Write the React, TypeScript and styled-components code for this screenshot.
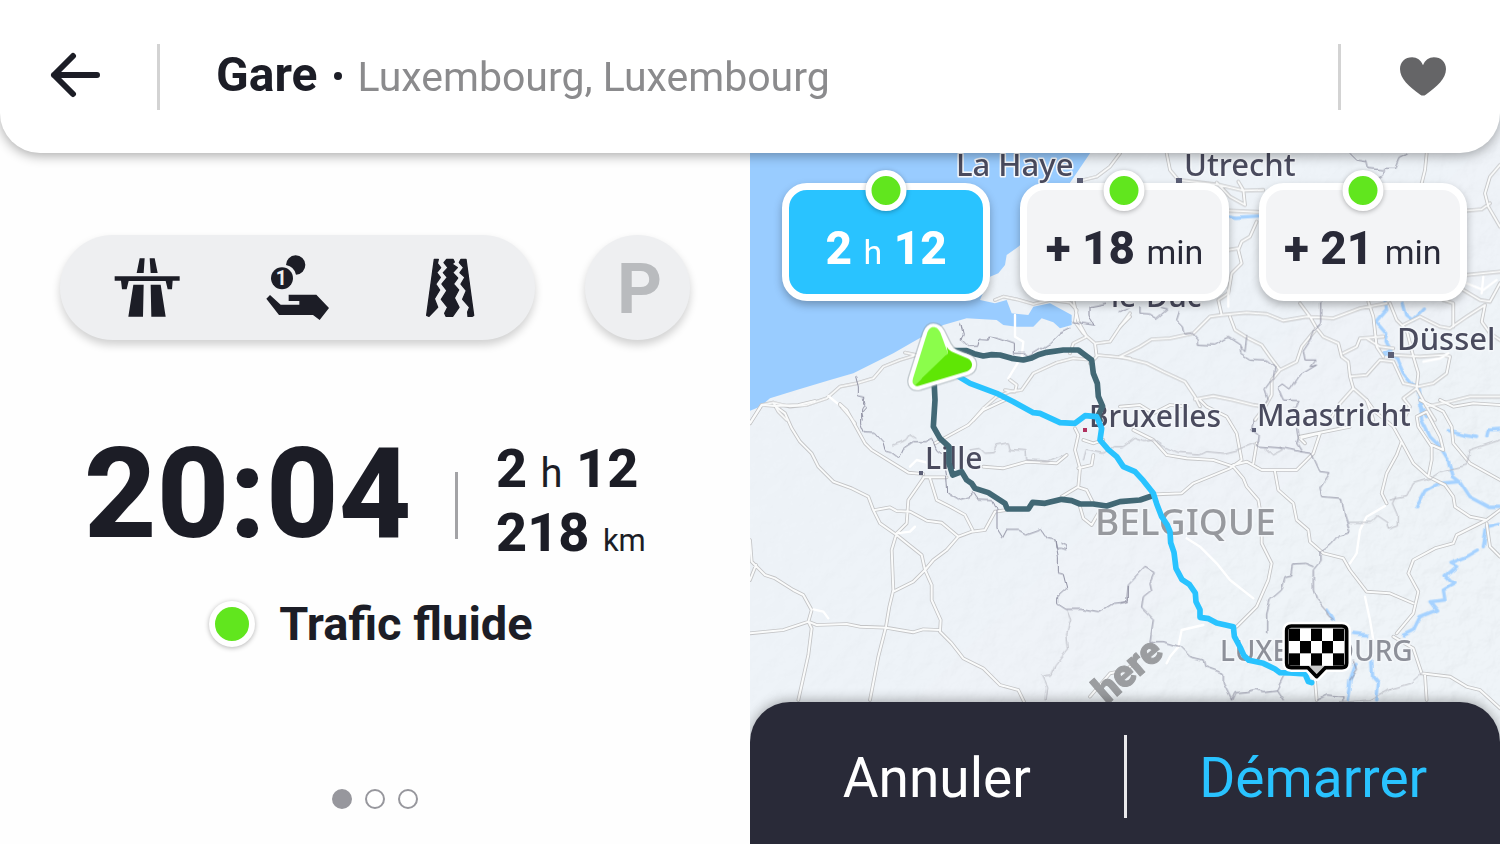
import React from "react";
import styled, { createGlobalStyle, css } from "styled-components";

const ink = "#1c1d26";
const navy = "#292a38";
const sky = "#29c3ff";
const lime = "#61e61e";

const GlobalStyle = createGlobalStyle`
  *, *::before, *::after { box-sizing: border-box; }
  body {
    margin: 0;
    background: #fefefe;
    color: ${ink};
    font-family: Roboto, "Liberation Sans", sans-serif;
  }
  h1, p { margin: 0; }
  button {
    margin: 0;
    padding: 0;
    border: 0;
    background: none;
    color: inherit;
    font: inherit;
    cursor: pointer;
  }
  svg { display: block; }
`;

const Screen = styled.div`
  display: flex;
  flex-direction: column;
  min-height: 100vh;
`;

const Header = styled.header`
  position: relative;
  z-index: 2;
  display: flex;
  align-items: center;
  height: 153px;
  background: #fff;
  border-radius: 0 0 40px 40px;
  box-shadow: 0 3px 12px rgba(0, 0, 0, 0.32);
`;

const BackButton = styled.button`
  display: flex;
  align-items: center;
  justify-content: center;
  flex: 0 0 157px;
  height: 100%;
  padding: 0 7px 3px 0;
`;

const FavouriteButton = styled.button`
  display: flex;
  align-items: center;
  justify-content: center;
  flex: 0 0 159px;
  height: 100%;
  padding-left: 4px;
`;

const Divider = styled.span<{ $height: number; $color: string }>`
  flex: none;
  width: 3px;
  height: ${(p) => p.$height}px;
  background: ${(p) => p.$color};
`;

const Destination = styled.div`
  flex: 1;
  display: flex;
  align-items: baseline;
  padding: 0 0 2px 56px;
  line-height: 56px;
  white-space: nowrap;
`;

const PlaceName = styled.h1`
  font-size: 48px;
  font-weight: 700;
`;

const Bullet = styled.span`
  align-self: center;
  width: 8px;
  height: 8px;
  margin: 0 15px 0 17px;
  border-radius: 50%;
  background: ${ink};
`;

const PlaceCity = styled.p`
  color: #8b8b8d;
  font-size: 41px;
`;

const Main = styled.main`
  flex: 1;
  display: grid;
  grid-template-columns: 1fr 1fr;
  margin-top: -40px;
`;

const Summary = styled.section`
  display: flex;
  flex-direction: column;
  padding: 122px 60px 35px;
`;

const Options = styled.div`
  display: flex;
  gap: 50px;
`;

const raised = css`
  height: 105px;
  background: #eeeff1;
  box-shadow: 0 5px 8px rgba(0, 0, 0, 0.18);
`;

const OptionPill = styled.div`
  ${raised}
  flex: 1;
  display: grid;
  grid-template-columns: repeat(3, 1fr);
  align-items: center;
  justify-items: center;
  padding: 0 9px 0 11px;
  border-radius: 53px;
`;

const ParkingButton = styled.button`
  ${raised}
  width: 105px;
  padding: 3px 0 0 4px;
  border-radius: 50%;
  color: #b9bbbe;
  font-size: 70px;
  font-weight: 700;
  line-height: 102px;
`;

const Arrival = styled.div`
  display: flex;
  align-items: center;
  margin-top: 80px;
  padding-left: 24px;
`;

const Clock = styled.p`
  width: 330px;
  font-size: 126px;
  font-weight: 800;
  line-height: 148px;
`;

const Totals = styled.div`
  padding: 14px 0 0 38px;
`;

const Figure = styled.p`
  height: 64px;
  font-size: 54px;
  font-weight: 800;
  line-height: 64px;
  white-space: nowrap;
`;

const Unit = styled.span<{ $size: number }>`
  font-size: ${(p) => p.$size}px;
  font-weight: 400;
  line-height: 1;
`;

const ClockDivider = styled(Divider)`
  margin: 22px 0 0 41px;
`;

const Traffic = styled.p`
  display: flex;
  align-items: center;
  justify-content: center;
  gap: 24px;
  margin-top: 28px;
  padding-right: 8px;
  font-size: 47px;
  font-weight: 700;
  line-height: 56px;
`;

const StatusDot = styled.span<{ $size: number }>`
  flex: none;
  width: ${(p) => p.$size}px;
  height: ${(p) => p.$size}px;
  border: 6px solid #fff;
  border-radius: 50%;
  background: ${lime};
  box-shadow: 0 1px 5px rgba(0, 0, 0, 0.3);
`;

const Pager = styled.nav`
  display: flex;
  justify-content: center;
  gap: 13px;
  margin-top: auto;
`;

const PageDot = styled.button<{ $active?: boolean }>`
  width: 20px;
  height: 20px;
  border: 2px solid #97979d;
  border-radius: 50%;
  background: ${(p) => (p.$active ? "#97979d" : "#fff")};
`;

const MapPanel = styled.section`
  position: relative;
  display: flex;
  flex-direction: column;
  justify-content: space-between;
  overflow: hidden;
  background: #ecf1f6;
`;

const MapCanvas = styled.svg`
  position: absolute;
  inset: 0;
  width: 100%;
  height: 100%;
`;

const Routes = styled.div`
  position: relative;
  display: grid;
  grid-template-columns: repeat(3, 1fr);
  gap: 30px;
  padding: 70px 33px 0 32px;
`;

const RouteCard = styled.button<{ $selected?: boolean }>`
  position: relative;
  height: 118px;
  border: 7px solid #fff;
  border-radius: 25px;
  background: ${(p) => (p.$selected ? sky : "#f3f4f6")};
  color: ${(p) => (p.$selected ? "#fff" : navy)};
  box-shadow: 0 4px 8px rgba(0, 0, 0, 0.28);
  font-size: 46px;
  font-weight: 800;
  line-height: 56px;
  padding-top: 11px;
  white-space: nowrap;
`;

const RouteStatus = styled(StatusDot)`
  position: absolute;
  top: -20px;
  left: 50%;
  transform: translateX(-50%);
`;

const Actions = styled.div`
  position: relative;
  display: flex;
  align-items: center;
  height: 142px;
  padding-top: 6px;
  border-radius: 40px 40px 0 0;
  background: ${navy};
  box-shadow: 0 -2px 12px rgba(0, 0, 0, 0.3);
`;

const Action = styled.button<{ $accent?: boolean }>`
  flex: 1;
  height: 100%;
  padding-top: 4px;
  color: ${(p) => (p.$accent ? sky : "#fff")};
  font-size: 55px;
`;

const MapLabel = styled.text<{ $size?: number; $tone?: string }>`
  font-family: "Noto Sans", "Open Sans", sans-serif;
  font-size: ${(p) => p.$size ?? 30}px;
  font-weight: 500;
  fill: ${(p) => p.$tone ?? "#4a4b5e"};
  stroke: #f4f7fa;
  stroke-width: 3px;
  stroke-linejoin: round;
  paint-order: stroke;
`;

const MapBrand = styled.text`
  font-family: Roboto, sans-serif;
  font-size: 38px;
  font-weight: 900;
  fill: #9b9da0;
  stroke: #9b9da0;
  stroke-width: 1px;
`;

/* Line work is stored per map tile, three units to a map pixel. */
type Tile = {
  x: number;
  y: number;
  rivers: string[];
  roads: string[];
  lanes: string[];
  borders: string[];
};

const tiles: Tile[] = [
  {
    x: 0,
    y: 81,
    rivers: [],
    roads: [
      "M735 480L760 470L800 478L850 492L900 480L960 488L980 510L975 545L1000 580L1035 610L1040 650L1020 670",
      "M970 480L985 545L1010 590L970 610L960 640",
      "M1040 610L1080 605L1110 560L1140 530",
      "M1040 645L1090 650L1140 655",
      "M465 638L500 645L450 660L400 680L370 715L320 730L270 740L230 775L170 795L120 800L70 788L35 795L0 850",
      "M70 788L85 815L110 840",
      "M1030 660L970 655L920 668L850 700L815 750L780 755L740 770L700 805L670 840",
      "M780 720L800 735L795 755L765 750",
      "M1110 40L1080 80L1040 110L1000 120",
      "M270 795L300 830L315 850",
    ],
    lanes: [
      "M795 525V590L820 605L815 650L790 690L775 715",
      "M235 768L262 790L280 800L310 840",
    ],
    borders: [
      "M632 548L640 580L633 600L655 622L683 622L690 598L715 600L720 588L750 598L790 612L790 640L820 640L835 650L900 610L930 580L960 565",
      "M965 545L1035 555L1020 530L1020 500L1070 490",
      "M317 710L325 740L325 770L345 775L340 795L348 805L335 820L340 840",
    ],
  },
  {
    x: 1110,
    y: 81,
    rivers: [
      "M325 228L350 232L415 228",
      "M795 485L800 510L770 545L800 580L795 600L810 630L790 640L830 655L850 700L870 725L895 750L900 800L920 830",
      "M850 490L860 525L880 540L910 510",
    ],
    roads: [
      "M140 40L150 90L175 120L300 135L370 152L430 150",
      "M290 128L330 170L375 195L370 150L355 125",
      "M920 40L915 90L905 130",
      "M325 212L415 216",
      "M1140 75L1110 110L1095 160L1105 200L1140 260",
      "M1040 212L1085 208L1110 190",
      "M410 245L390 290L365 305L355 330L365 370L335 400L325 460L295 480L305 525",
      "M325 330L355 325",
      "M305 525L380 518L440 522L490 542L560 530L640 535L720 505L800 490",
      "M305 525L270 530L220 580L150 595L95 598L60 620L0 650",
      "M0 650L80 670L130 695L195 725L225 770L240 800",
      "M225 778L280 768L340 780L400 795L435 800",
      "M330 530L345 570L385 595L425 615L450 650L480 690L455 720L455 765L435 800L405 840",
      "M480 690L530 665L545 620L590 565L570 530L540 490",
      "M590 565L610 590L655 610L665 650L685 665L690 710L700 745L660 790L630 840",
      "M690 710L740 705L780 660L820 665L850 730L895 740",
      "M670 640L710 620L720 595L790 590",
      "M740 595L780 620L820 625",
      "M745 485L760 530L770 620L790 650",
      "M810 490L830 540L860 570L880 650L895 700L890 745L920 800L945 840",
      "M820 645L900 650L970 645L990 650L980 700L940 730L895 740",
      "M850 555L900 530L960 560L990 565L1040 530L1095 495",
      "M1040 405L1140 395",
      "M1030 450L1080 480L1110 485L1140 430",
      "M1095 495L1085 545L1110 580L1140 600",
      "M970 480L1000 490L1000 560",
      "M700 745L740 780L760 840",
      "M890 745L850 775L870 800L850 840",
      "M920 800L990 785L1050 770L1140 770",
      "M0 560L30 520",
    ],
    lanes: [
      "M910 665L960 655L985 640",
      "M1040 430L1090 450L1130 420",
      "M1090 410L1085 460",
      "M325 450V500",
    ],
    borders: [
      "M690 40L710 60L740 65L745 85L790 90L788 105L775 115",
      "M790 85L828 85L840 55L865 42",
      "M60 500L60 520L90 522L110 535L140 510L120 505",
      "M178 515L170 540L190 560L195 582L215 580L232 600L232 613L285 615L325 592L360 615L362 640L390 658L440 660L465 680L460 715L435 750L445 780L430 800",
      "M605 485L605 550L580 575L570 600L550 630L555 660L585 660L570 680L590 675L540 705L510 750L490 735L475 745L490 780L535 782L530 800L515 810L535 840",
      "M380 590L375 635L360 620",
      "M0 515L30 500",
    ],
  },
  {
    x: 0,
    y: 861,
    rivers: [],
    roads: [
      "M0 70L35 15L75 18L145 15L195 3",
      "M75 18L105 40L125 85L150 125L185 160L205 200L250 245L305 265L355 290L370 330L390 370L440 405L515 465L525 510L545 555L545 600L572 660L570 695L605 730L640 775L700 805L750 855L805 870L822 905",
      "M270 12L290 30L345 130L365 150L430 190L475 218L520 222",
      "M520 235L475 300L470 370L440 400L425 450L430 570L418 620L408 680L385 770L360 900",
      "M540 235L560 300L600 320L645 345L668 390",
      "M520 232L590 232",
      "M375 330L420 322L440 333L480 335L530 362L575 368L625 410L665 395L705 390L735 335L770 330",
      "M625 410L590 450L550 480L525 510L490 545L430 575",
      "M555 130L600 105L655 75L700 30L765 0",
      "M0 420L5 485L45 525L75 535L130 570L160 585L185 630L175 665L185 685L175 765L145 900",
      "M0 540L18 495",
      "M0 700L100 690L175 665L200 675L290 672L330 680L408 683L490 697L520 688L568 690",
      "M700 200L760 205L830 185L920 190L950 165",
      "M975 85L985 105L975 150L990 205L985 260L935 290",
      "M985 262L1010 270L1030 310",
      "M985 205L1025 195L1030 165",
      "M990 320L1000 355L1025 375L1045 340",
      "M1000 120L1030 130L1060 120",
      "M1020 890L1080 820L1130 810L1140 800",
    ],
    lanes: [
      "M480 200L500 180L540 190",
      "M440 400L480 395L495 380",
      "M190 628L220 635L235 655",
    ],
    borders: [
      "M340 0L345 15L335 30L335 70L345 95L370 97L400 130L405 150L425 155L448 172L460 145L490 125L525 125L545 115L560 150L580 165L590 230L593 280L625 300L660 290L670 278L685 300L725 302L738 330L738 385L755 413L768 388L805 388L830 402L875 386L895 415L915 420L918 445L932 445L948 450L948 438L932 430M915 420L925 470L925 515L943 520L953 560L920 590L920 612L945 628L990 628L1045 638L1090 610L1135 605L1135 560",
    ],
  },
  {
    x: 1110,
    y: 861,
    rivers: [
      "M900 0L905 60L930 110L960 140L985 180L1000 230L1020 245L1050 290L1110 322L1140 322",
      "M1020 245L960 250L915 275L890 320",
      "M985 92L1030 106L1070 112",
      "M1100 110L1105 90L1140 88",
      "M1135 370L1100 380L1090 440",
      "M1075 450L1040 470L990 490L1010 500L975 530L990 545L1005 550L970 570L975 600L930 605L950 630L900 650L880 690L850 705",
      "M755 780L758 830L775 850L770 900",
      "M700 700L740 705",
      "M708 790L690 840L682 900",
      "M622 630L640 660",
    ],
    roads: [
      "M0 20L60 15L100 40L150 15L200 20",
      "M40 90L100 120L140 165L200 175L280 180L340 200L370 235L380 260L415 300L425 360L425 430L455 490L445 540L410 620L350 680",
      "M240 0L260 20L320 50L350 100L365 180L330 205L270 230L220 250L185 280L110 283",
      "M340 195L380 185L425 210L530 210L580 160L600 100L540 115L555 130",
      "M410 130L400 190",
      "M540 110L600 98L690 80",
      "M465 215L475 270L520 310L530 360L565 390L570 425L610 460L670 475L690 510L740 575L810 580L880 610",
      "M740 0L765 35L820 80L845 125L830 165L800 220L785 280L800 310",
      "M845 125L880 190L925 230L975 255L1000 290L1005 320L1050 350L1100 360L1140 330",
      "M925 230L935 180L935 140L895 80L890 50L920 35L960 110L970 150L935 135",
      "M900 0L970 35L995 80L1000 130L1050 190L1140 240",
      "M1100 360L1010 405L1000 430L945 445L880 480L865 520L895 575L880 640L830 700",
      "M820 710L880 745L905 820L990 830L1040 860L1080 870L1140 925",
      "M915 825L920 900",
      "M585 840L590 900",
      "M1100 370L1110 440L1140 470",
      "M960 0L1000 20L1060 10L1140 15",
    ],
    lanes: [
      "M795 318L740 350L720 390L710 460L690 490",
      "M200 415L240 440L290 490L330 540L400 595",
      "M735 590L750 660L760 720",
      "M250 675L185 690L175 740L150 770L140 790",
    ],
    borders: [
      "M400 60L395 90L415 105L410 138L495 145L540 155L575 160L600 215L630 218L600 265L605 290L665 295L675 350L690 395L655 405L635 430L600 455L600 485L580 510L580 570L590 600L620 635L625 650L640 662",
      "M530 85L535 115L530 130L545 155",
      "M580 500L555 490L520 492L515 525L495 530L485 570L450 600L440 640L440 700",
      "M0 610L20 605L25 555L75 502L103 518L90 548L95 570L70 590L65 625L100 660L90 725L130 725L180 740L210 770L250 780L255 800L310 820L310 850L335 900",
      "M335 900L345 878L380 875L410 868L430 875L470 870L490 830",
      "M470 870L490 900",
      "M590 900L620 885L670 890L665 905",
      "M700 780L710 810L690 840",
    ],
  },
];

/* Regional limits, drawn fainter than the national borders. */
const regions = [
  "M430 996L470 981L480 966L495 976",
  "M660 1011L690 1006L705 1021L730 1019L740 996L775 989L780 1009L828 1013L830 1041L895 1044L935 1026",
  "M950 1491L962 1521L950 1561L955 1611L915 1661L905 1686L875 1689L890 1721L885 1761",
  "M1000 1041L1010 1011L1060 1021L1090 1001L1120 1001L1155 976L1185 986L1210 981L1240 1001L1280 1021L1350 1026L1370 1016L1420 1021L1460 1011L1510 991",
  "M1550 1006L1570 1026L1600 1011L1590 1001",
  "M1940 1151L1930 1171L1945 1206L1945 1236L1915 1246L1910 1231L1880 1211L1860 1231L1795 1231",
  "M1920 1161L1970 1151L1990 1111L2040 1096L2070 1076L2150 1056L2160 1011L2250 981",
  "M1750 1771L1860 1761L1915 1731L1980 1711L2015 1681",
];

const darkRoute = [
  "M600 713L650 713L672 722L700 729L725 725L750 726L785 736L820 741L845 735L865 725L890 718L940 711L985 711L1005 726L1025 741L1030 781L1042 811L1045 850L1058 880L1045 906L1050 922",
  "M552 800L555 861L550 941L570 976L597 1001L597 1051L608 1086L635 1076L650 1101L665 1111L675 1126L715 1139L765 1171L772 1188L835 1188L848 1168L885 1171L935 1159L965 1163L990 1173L1030 1173L1070 1179L1110 1166L1170 1161L1205 1149",
];
const lightRoute =
  "M600 775L630 793L660 811L740 841L790 866L850 899L870 901L930 929L975 931L1005 908L1040 911L1055 946L1050 981L1075 1010L1100 1031L1120 1061L1155 1076L1180 1103L1210 1141L1220 1172L1235 1211L1252 1236L1260 1256L1262 1289L1272 1318L1278 1366L1296 1400L1318 1414L1336 1440L1338 1466L1350 1490L1350 1513L1376 1517L1400 1530L1450 1541L1453 1570L1470 1602L1482 1628L1497 1642L1540 1651L1575 1668L1590 1679L1620 1680L1665 1683L1675 1706L1685 1709";

const checks = Array.from({ length: 15 }, (_, i) => i).filter((i) => i % 2 === 0);

const flagShape =
  "M514 678H666Q680 678 680 692V789Q680 803 666 803H616L590 830L564 803H514Q500 803 500 789V692Q500 678 514 678Z";
const arrowShape =
  "M550 566C541 566 537 574 534 582L492 715C487 731 494 738 508 734L650 690C667 684 667 666 652 659L614 643C600 637 595 632 588 618L568 578C563 569 558 566 550 566Z";

function RouteMap() {
  return (
    <MapCanvas
      viewBox="0 0 750 731"
      preserveAspectRatio="xMidYMid slice"
      role="img"
      aria-label="Carte des itinéraires"
    >
      <defs>
        <filter id="relief" x="0" y="0" width="100%" height="100%">
          <feTurbulence type="fractalNoise" baseFrequency="0.05" numOctaves="5" seed="8" />
          <feDiffuseLighting surfaceScale="4" lightingColor="#ffffff">
            <feDistantLight azimuth="225" elevation="60" />
          </feDiffuseLighting>
        </filter>
        <filter id="meander" filterUnits="userSpaceOnUse" x="0" y="0" width="2250" height="2193">
          <feTurbulence type="fractalNoise" baseFrequency="0.025" numOctaves="1" seed="3" />
          <feDisplacementMap in="SourceGraphic" scale="18" xChannelSelector="R" yChannelSelector="G" />
        </filter>
        <linearGradient id="reliefFade" x1="0" y1="0" x2="1" y2="1">
          <stop offset="0.35" stopColor="#fff" stopOpacity="0.2" />
          <stop offset="0.75" stopColor="#fff" stopOpacity="0.8" />
        </linearGradient>
        <mask id="reliefMask">
          <rect width="750" height="731" fill="url(#reliefFade)" />
        </mask>
      </defs>
      <rect width="750" height="731" fill="#eef3f8" />
      <g mask="url(#reliefMask)">
        <rect width="750" height="731" filter="url(#relief)" opacity="0.13" />
      </g>
      <g transform="scale(0.33333)" fill="none" strokeLinejoin="round" strokeLinecap="round">
        <path
          fill="#99ccff"
          d="M0 0H1060L1020 121L960 209L880 330L805 401L770 426L765 456L745 481L720 491L690 561L735 571L770 561L785 601L835 606L850 581L900 571L965 606V636L930 646L910 628L875 616L850 641L800 641L760 636L740 621L650 616L580 636L490 686L430 721L310 781L240 801L140 831L60 856L30 881L0 893Z"
        />
        <g filter="url(#meander)">
          {tiles.map((t) => (
            <path
              key={`${t.x}-${t.y}`}
              transform={`translate(${t.x} ${t.y})`}
              d={t.rivers.join("")}
              stroke="#a6d2ff"
              strokeWidth="10"
            />
          ))}
        </g>
        {tiles.map((t) => (
          <g key={`${t.x}-${t.y}`} transform={`translate(${t.x} ${t.y})`}>
            <path d={t.roads.join("")} stroke="#c3c4c6" strokeWidth="11" />
            <path d={t.lanes.join("")} stroke="#fff" strokeWidth="7" />
          </g>
        ))}
        {tiles.map((t) => (
          <path
            key={`${t.x}-${t.y}`}
            transform={`translate(${t.x} ${t.y})`}
            d={t.roads.join("")}
            stroke="#fafbfb"
            strokeWidth="6"
          />
        ))}
        <g filter="url(#meander)">
          <path d={regions.join("")} stroke="#b9bac2" strokeWidth="3" />
          {tiles.map((t) => (
            <path
              key={`${t.x}-${t.y}`}
              transform={`translate(${t.x} ${t.y})`}
              d={t.borders.join("")}
              stroke="#8f90a2"
              strokeWidth="3"
            />
          ))}
        </g>
      </g>
      <g fill="#5c5f76">
        <rect x="327" y="65" width="6" height="6" />
        <rect x="426" y="65" width="6" height="6" />
        <rect x="638" y="239" width="6" height="6" />
        <rect x="169" y="358" width="4" height="4" />
        <rect x="502" y="315" width="4" height="4" />
        <rect x="333" y="315" width="4" height="4" fill="#b0305e" />
      </g>
      <MapLabel x="206" y="63" $size={31}>La Haye</MapLabel>
      <MapLabel x="434" y="63" $size={31}>Utrecht</MapLabel>
      <MapLabel x="361" y="194">le-Duc</MapLabel>
      <MapLabel x="647" y="237" $size={31}>Düssel</MapLabel>
      <MapLabel x="339" y="314">Bruxelles</MapLabel>
      <MapLabel x="507" y="313">Maastricht</MapLabel>
      <MapLabel x="175" y="356">Lille</MapLabel>
      <MapLabel x="345" y="422" $size={37} $tone="#97999e">BELGIQUE</MapLabel>
      <MapLabel x="470" y="548" $size={28} $tone="#8d9099">LUXEMBOURG</MapLabel>
      <MapBrand transform="translate(357 592) rotate(-41)">here</MapBrand>
      <g transform="scale(0.33333)" fill="none" strokeLinejoin="round" strokeLinecap="round">
        <path d={darkRoute.join("")} stroke="#426875" strokeWidth="17" />
        <path d={lightRoute} stroke={sky} strokeWidth="17" />
        <g transform="translate(0 81)">
          <path d={arrowShape} stroke="#8f989e" strokeOpacity="0.45" strokeWidth="38" />
          <path d={arrowShape} fill="#5fe605" stroke="#fff" strokeWidth="30" />
          <path
            d="M550 561C541 561 535 569 532 578L489 715C486 726 488 732 494 736L594 640L572 580C566 567 560 561 550 561Z"
            fill="#8bfd4b"
          />
          <path
            d="M494 736C499 739 505 738 511 736L651 694C670 687 671 665 654 656L612 638C602 634 596 630 590 620L594 640Z"
            fill="#5fe605"
          />
        </g>
        <g transform="translate(1110 861)">
          <path d={flagShape} stroke="#fff" strokeWidth="26" />
          <path d={flagShape} fill="#c8c8c8" stroke="#000" strokeWidth="11" />
          <rect x="507" y="686" width="165" height="111" rx="7" fill="#fff" />
          {checks.map((i) => (
            <rect
              key={i}
              x={507 + (i % 5) * 33}
              y={686 + Math.floor(i / 5) * 37}
              width="33"
              height="37"
              fill="#000"
            />
          ))}
        </g>
      </g>
    </MapCanvas>
  );
}

function BackIcon() {
  return (
    <svg width="52" height="46" viewBox="0 0 52 46" fill="none" stroke={ink} strokeWidth="6" strokeLinecap="round" strokeLinejoin="round">
      <path d="M48 23H5M24 4L5 23L24 42" />
    </svg>
  );
}

function HeartIcon() {
  return (
    <svg width="46" height="39" viewBox="0 0 136 114" fill="#656567">
      <path d="M68 24C62 8 50 0 36 0C15 0 0 14 0 35C0 63 27 88 59 110Q68 117 77 110C109 88 136 63 136 35C136 14 121 0 100 0C86 0 74 8 68 24Z" />
    </svg>
  );
}

function MotorwayIcon() {
  return (
    <svg width="66" height="60" viewBox="190 115 198 180" fill={ink} role="img" aria-label="Autoroutes">
      <path d="M267 116H282L279 160H258ZM297 116H312L321 160H300ZM192 170H387V183H366L364 209H351L345 184H234L228 209H214L211 183H192ZM248 195H279L277 291H233ZM300 195H330L345 291H302Z" />
    </svg>
  );
}

function TollIcon() {
  return (
    <svg width="64" height="66" viewBox="648 102 192 198" fill={ink} role="img" aria-label="Péages">
      <path d="M708 132A29 29 0 1 1 738 161Q733 137 708 132Z" />
      <circle cx="696" cy="172" r="33" />
      <text x="694" y="192" textAnchor="middle" fontFamily="Roboto, sans-serif" fontSize="58" fontWeight="700" fill="#eeeff1">
        1
      </text>
      <path d="M649 233L660 222L692 251H748V240H716V221H799L837 261L809 297L789 282H687Z" />
    </svg>
  );
}

function UnpavedIcon() {
  return (
    <svg width="50" height="60" viewBox="1125 114 150 180" fill={ink} stroke={ink} strokeWidth="4" strokeLinejoin="round" role="img" aria-label="Routes non pavées">
      <path d="M1153 118H1165L1162 130L1172 143L1160 158L1171 172L1157 192L1169 210L1153 236L1163 262L1137 289L1130 286Z" />
      <path d="M1190 118H1209L1213 126L1206 132L1222 143L1208 158L1223 174L1210 192L1226 210L1213 234L1227 262L1208 289H1188L1184 280L1193 262L1174 238L1191 212L1176 192L1192 172L1180 158L1194 143L1182 128Z" />
      <path d="M1233 118H1248L1271 286L1266 289H1254L1253 276L1259 262L1238 238L1249 212L1233 192L1245 172L1230 158L1241 143L1228 128Z" />
    </svg>
  );
}

export default function App() {
  return (
    <>
      <GlobalStyle />
      <Screen>
        <Header>
          <BackButton aria-label="Retour">
            <BackIcon />
          </BackButton>
          <Divider $height={66} $color="#d3d3d3" />
          <Destination>
            <PlaceName>Gare</PlaceName>
            <Bullet />
            <PlaceCity>Luxembourg, Luxembourg</PlaceCity>
          </Destination>
          <Divider $height={66} $color="#d3d3d3" />
          <FavouriteButton aria-label="Ajouter aux favoris">
            <HeartIcon />
          </FavouriteButton>
        </Header>
        <Main>
          <Summary>
            <Options>
              <OptionPill>
                <MotorwayIcon />
                <TollIcon />
                <UnpavedIcon />
              </OptionPill>
              <ParkingButton aria-label="Parking">P</ParkingButton>
            </Options>
            <Arrival>
              <Clock>20:04</Clock>
              <ClockDivider $height={67} $color="#a3a3a6" />
              <Totals>
                <Figure>
                  2 <Unit $size={40}>h</Unit> 12
                </Figure>
                <Figure>
                  218 <Unit $size={31}>km</Unit>
                </Figure>
              </Totals>
            </Arrival>
            <Traffic>
              <StatusDot $size={46} />
              Trafic fluide
            </Traffic>
            <Pager aria-label="Pages">
              <PageDot $active aria-label="Page 1" />
              <PageDot aria-label="Page 2" />
              <PageDot aria-label="Page 3" />
            </Pager>
          </Summary>
          <MapPanel>
            <RouteMap />
            <Routes>
              <RouteCard $selected>
                <RouteStatus $size={41} />2 <Unit $size={34}>h</Unit> 12
              </RouteCard>
              <RouteCard>
                <RouteStatus $size={41} />+ 18 <Unit $size={34}>min</Unit>
              </RouteCard>
              <RouteCard>
                <RouteStatus $size={41} />+ 21 <Unit $size={34}>min</Unit>
              </RouteCard>
            </Routes>
            <Actions>
              <Action>Annuler</Action>
              <Divider $height={83} $color="#e9e9eb" />
              <Action $accent>Démarrer</Action>
            </Actions>
          </MapPanel>
        </Main>
      </Screen>
    </>
  );
}
